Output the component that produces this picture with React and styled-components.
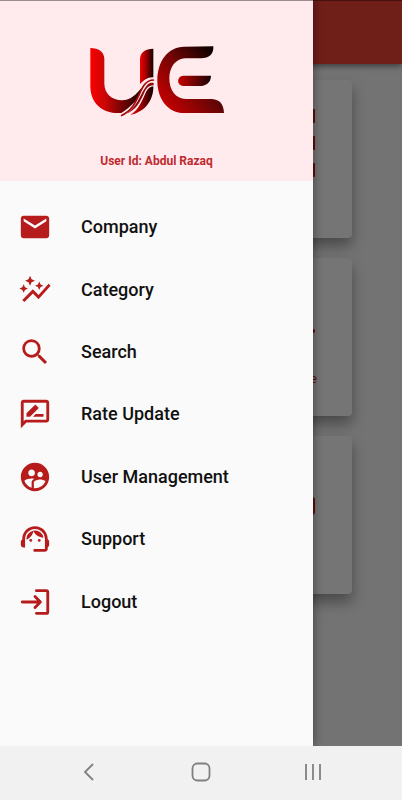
import styled, { createGlobalStyle } from "styled-components";
import {
  MdAutoGraph,
  MdEmail,
  MdOutlineRateReview,
  MdSearch,
  MdSupervisedUserCircle,
  MdSupportAgent,
} from "react-icons/md";

const GlobalStyle = createGlobalStyle`
  * {
    box-sizing: border-box;
  }
  body {
    margin: 0;
    font-family: Roboto, "Liberation Sans", sans-serif;
    background: #f1f1f1;
  }
`;

const Phone = styled.div`
  display: flex;
  flex-direction: column;
  min-height: 100vh;
`;

const Screen = styled.div`
  position: relative;
  display: flex;
  flex: 1;
  overflow: hidden;
  background: #fafafa;
`;

const Home = styled.main`
  flex: 1;
`;

const AppBar = styled.header`
  height: 64px;
  background: #f44336;
  box-shadow: 0 2px 6px rgba(0, 0, 0, 0.5);
`;

const CardGrid = styled.div`
  display: grid;
  grid-template-columns: 1fr 1fr;
  gap: 20px;
  padding: 16px 50px;
`;

const Card = styled.div`
  display: flex;
  flex-direction: column;
  align-items: center;
  height: 158px;
  padding-top: 25px;
  border-radius: 4px;
  color: #d01c1c;
  background: #fff;
  box-shadow: 0 8px 14px rgba(0, 0, 0, 0.36);
`;

const CardIcon = styled.svg`
  width: 66px;
  height: 76px;
`;

const CardLabel = styled.span`
  margin-top: 12px;
  font-size: 13px;
  line-height: 16px;
`;

const Scrim = styled.div`
  position: absolute;
  inset: 0;
  background: rgba(0, 0, 0, 0.54);
`;

const Drawer = styled.aside`
  position: absolute;
  top: 0;
  bottom: 0;
  left: 0;
  width: 78%;
  max-width: 313px;
  background: #fafafa;
  box-shadow: 0 0 10px rgba(0, 0, 0, 0.45);
`;

const DrawerHeader = styled.div`
  display: flex;
  flex-direction: column;
  align-items: center;
  height: 181px;
  padding-top: 35px;
  background: #ffebee;
`;

const LogoImage = styled.svg`
  width: 162px;
  height: 90px;
`;

const UserId = styled.p`
  margin: 28px 0 0;
  font-size: 12px;
  font-weight: 700;
  line-height: 16px;
  color: #c0282d;
`;

const Menu = styled.nav`
  display: grid;
  grid-auto-rows: 1fr;
  height: 437px;
  margin-top: 15px;
`;

const MenuLink = styled.a`
  display: flex;
  align-items: center;
  gap: 29px;
  padding-left: 18px;
  font-size: 18px;
  font-weight: 500;
  line-height: 24px;
  color: #111;
  text-decoration: none;

  svg {
    width: 34px;
    height: 34px;
    color: #b71c1c;
  }
`;

const StatusLine = styled.div`
  position: absolute;
  top: 0;
  left: 0;
  right: 0;
  height: 1px;
  background: rgba(0, 0, 0, 0.4);
`;

const SystemBar = styled.footer`
  display: flex;
  justify-content: space-evenly;
  align-items: center;
  height: 54px;
  padding-bottom: 2px;
  background: #f1f1f1;
`;

const SystemButton = styled.button`
  display: flex;
  justify-content: center;
  width: 24px;
  padding: 0;
  border: 0;
  margin: 0 10px;
  color: #808080;
  background: none;

  svg {
    width: 24px;
    height: 24px;
    fill: none;
    stroke: currentColor;
    stroke-width: 1.8;
  }
`;

const Logo = () => (
  <LogoImage viewBox="3 0 480 270" role="img" aria-label="UE">
    <defs>
      <linearGradient id="bowl" x1="0" y1="0.5" x2="1" y2="0.5">
        <stop offset="0" stopColor="#f80000" />
        <stop offset="0.3" stopColor="#c90606" />
        <stop offset="1" stopColor="#120000" />
      </linearGradient>
      <linearGradient id="stem">
        <stop offset="0" stopColor="#f00000" />
        <stop offset="0.45" stopColor="#a00000" />
        <stop offset="1" stopColor="#100000" />
      </linearGradient>
      <linearGradient id="top" x1="0" y1="0.8" x2="1" y2="0">
        <stop offset="0" stopColor="#c90000" />
        <stop offset="0.45" stopColor="#700505" />
        <stop offset="0.85" stopColor="#100000" />
      </linearGradient>
      <linearGradient id="bar">
        <stop offset="0" stopColor="#c80000" />
        <stop offset="1" stopColor="#180505" />
      </linearGradient>
    </defs>
    <path
      fill="url(#bowl)"
      d="M43 39C67 40 85 49 85 73V145C85 177 108 196 138 196C164 195 182 177 197 158C194 190 166 213 136 234C81 238 43 206 43 153Z"
    />
    <path fill="url(#stem)" d="M192 147V74C192 51 208 41 232 41V127C214 126 204 136 192 147Z" />
    <path
      fill="none"
      stroke="#a30808"
      strokeWidth="5"
      d="M135 242C181 222 184 180 204 151C212 139 221 135 234 135"
    />
    <path
      fill="#8b0808"
      d="M151 236C184 215 190 183 207 159C214 147 222 142 233 144V151C217 150 210 162 203 177C192 202 179 226 151 236Z"
    />
    <path
      fill="url(#stem)"
      d="M163 240C191 222 199 194 210 171C216 159 223 155 232 154C233 195 208 231 163 240Z"
    />
    <path
      fill="url(#top)"
      d="M412 34C414 57 399 70 375 70H328C298 71 280 98 280 130C280 166 299 191 329 192H408C431 194 443 207 444 234H324C277 234 244 194 244 137C244 77 276 36 324 35Z"
    />
    <path
      fill="url(#bar)"
      d="M322 122H405C405 142 390 153 370 153H322C301 151 301 124 322 122Z"
    />
  </LogoImage>
);

const LogoutIcon = () => (
  <svg
    viewBox="0 0 24 24"
    fill="none"
    stroke="currentColor"
    strokeWidth="2"
    strokeLinecap="round"
    strokeLinejoin="round"
  >
    <path d="M13 4H20Q21 4 21 5V19Q21 20 20 20H13M3 12H15.5M12 8.2L15.8 12L12 15.8" />
  </svg>
);

const menuItems = [
  { label: "Company", Icon: MdEmail },
  { label: "Category", Icon: MdAutoGraph },
  { label: "Search", Icon: MdSearch },
  { label: "Rate Update", Icon: MdOutlineRateReview },
  { label: "User Management", Icon: MdSupervisedUserCircle },
  { label: "Support", Icon: MdSupportAgent },
  { label: "Logout", Icon: LogoutIcon },
];

const HomeCards = () => (
  <CardGrid>
    <Card />
    <Card>
      <CardIcon viewBox="0 0 66 76" fill="currentColor">
        <rect y="4" width="66" height="14" rx="1" />
        <rect y="31" width="66" height="14" rx="1" />
        <rect y="58" width="66" height="14" rx="1" />
      </CardIcon>
    </Card>
    <Card />
    <Card>
      <CardIcon viewBox="0 0 66 76" fill="none" stroke="currentColor" strokeWidth="4">
        <path d="M4 66L22 46L38 58L64 48" strokeLinecap="round" />
      </CardIcon>
      <CardLabel>Rate Update</CardLabel>
    </Card>
    <Card />
    <Card>
      <CardIcon viewBox="0 0 66 76" fill="none" stroke="currentColor" strokeWidth="2">
        <rect x="1" y="37" width="64" height="16" rx="2" />
      </CardIcon>
    </Card>
  </CardGrid>
);

const App = () => (
  <>
    <GlobalStyle />
    <Phone>
      <Screen>
        <Home aria-hidden="true">
          <AppBar />
          <HomeCards />
        </Home>
        <Scrim />
        <Drawer>
          <DrawerHeader>
            <Logo />
            <UserId>User Id: Abdul Razaq</UserId>
          </DrawerHeader>
          <Menu>
            {menuItems.map(({ label, Icon }) => (
              <MenuLink key={label} href="#">
                <Icon />
                {label}
              </MenuLink>
            ))}
          </Menu>
        </Drawer>
        <StatusLine />
      </Screen>
      <SystemBar>
        <SystemButton aria-label="Back">
          <svg viewBox="0 0 24 24">
            <path d="M15 4L7 12L15 20" />
          </svg>
        </SystemButton>
        <SystemButton aria-label="Home">
          <svg viewBox="0 0 24 24">
            <rect x="3.5" y="3.5" width="17" height="17" rx="5" />
          </svg>
        </SystemButton>
        <SystemButton aria-label="Recent apps">
          <svg viewBox="0 0 24 24">
            <path d="M5 4V20M12 4V20M19 4V20" />
          </svg>
        </SystemButton>
      </SystemBar>
    </Phone>
  </>
);

export default App;
